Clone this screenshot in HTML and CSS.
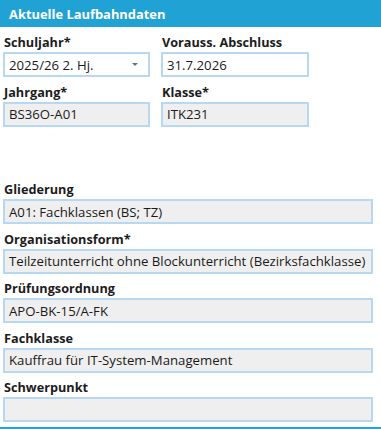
FILE: index.html
```html
<!DOCTYPE html>
<html lang="de">
<head>
<meta charset="utf-8">
<link rel="stylesheet" href="styles.css">
</head>
<body>
<div class="panel">
  <div class="header">Aktuelle Laufbahndaten</div>
  <div class="content">
    <div class="grid2">
      <div class="group first">
        <div class="label">Schuljahr*</div>
        <div class="field white select"><span>2025/26 2. Hj.</span><span class="arrow"></span></div>
      </div>
      <div class="group first">
        <div class="label">Vorauss. Abschluss</div>
        <div class="field white">31.7.2026</div>
      </div>
      <div class="group">
        <div class="label">Jahrgang*</div>
        <div class="field">BS36O-A01</div>
      </div>
      <div class="group">
        <div class="label">Klasse*</div>
        <div class="field">ITK231</div>
      </div>
    </div>
    <div class="spacer"></div>
    <div class="group">
      <div class="label">Gliederung</div>
      <div class="field">A01: Fachklassen (BS; TZ)</div>
    </div>
    <div class="group">
      <div class="label">Organisationsform*</div>
      <div class="field">Teilzeitunterricht ohne Blockunterricht (Bezirksfachklasse)</div>
    </div>
    <div class="group">
      <div class="label">Prüfungsordnung</div>
      <div class="field">APO-BK-15/A-FK</div>
    </div>
    <div class="group">
      <div class="label">Fachklasse</div>
      <div class="field">Kauffrau für IT-System-Management</div>
    </div>
    <div class="group">
      <div class="label">Schwerpunkt</div>
      <div class="field"></div>
    </div>
  </div>
  <div class="bottomline"></div>
</div>
</body>
</html>
```
FILE: styles.css
```css
html, body {
  margin: 0;
  padding: 0;
  background: #ffffff;
}
body {
  font-family: "Open Sans", "Noto Sans", sans-serif;
  color: #1c1c1c;
  width: 381px;
  height: 429px;
  overflow: hidden;
}
.panel {
  display: flex;
  flex-direction: column;
  height: 429px;
}
.header {
  height: 27px;
  background: #21a2d4;
  color: #ffffff;
  font-weight: 700;
  font-size: 12.9px;
  padding-left: 9px;
  display: flex;
  align-items: center;
  box-sizing: border-box;
  padding-top: 1px;
}
.content {
  padding: 0 8px 0 3px;
  flex: 1;
  display: flex;
  flex-direction: column;
}
.grid2 {
  display: grid;
  grid-template-columns: 147px 148px;
  column-gap: 11px;
}
.spacer {
  height: 48px;
}
.group {
  display: flex;
  flex-direction: column;
}
.label {
  height: 24.5px;
  display: flex;
  align-items: flex-end;
  padding-bottom: 2px;
  box-sizing: border-box;
  font-weight: 700;
  font-size: 12.7px;
  line-height: 16px;
  padding-left: 1px;
}
.group.first .label {
  height: 25px;
}
.field {
  height: 25px;
  box-sizing: border-box;
  border: 2px solid #b6d8f3;
  background: #efefef;
  font-size: 13.2px;
  color: #1a1a1a;
  padding: 0 4px;
  display: flex;
  align-items: center;
  white-space: nowrap;
  overflow: hidden;
}
.field.white {
  background: #ffffff;
}
.select {
  justify-content: space-between;
  padding-right: 10px;
}
.arrow {
  width: 0;
  height: 0;
  border-left: 3px solid transparent;
  border-right: 3px solid transparent;
  border-top: 3px solid #5f7391;
}
.bottomline {
  height: 2px;
  background: #1ea6da;
  margin-top: auto;
}
```
